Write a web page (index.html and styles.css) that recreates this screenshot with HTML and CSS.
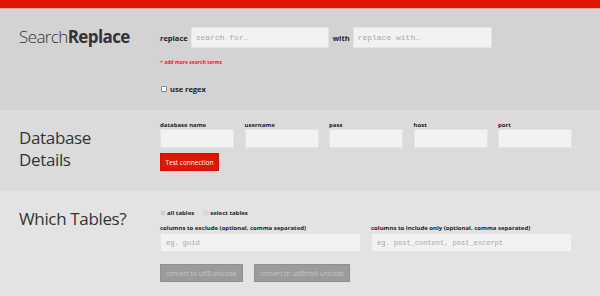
FILE: index.html
```html
<!DOCTYPE html>
<html lang="en">
  <head>
    <meta charset="UTF-8" />
    <meta name="viewport" content="width=device-width, initial-scale=1.0" />
    <title>Search Replace DB</title>
    <link rel="stylesheet" href="styles.css">
  </head>
  <body>
    <div class="topbar"></div>

    <div class="section search">
      <h1 class="heading">Search<strong>Replace</strong></h1>
      <div class="form">
        <div class="replace-row">
          <label for="search">replace</label>
          <input type="text" id="search" placeholder="search for…" />
          <label for="replace">with</label>
          <input type="text" id="replace" placeholder="replace with…" />
        </div>
        <a href="#" class="add-more">+ add more search terms</a>
        <div class="check-row">
          <input type="checkbox" id="regex" />
          <label for="regex">use regex</label>
        </div>
      </div>
    </div>

    <div class="section database">
      <h2 class="heading">Database<br />Details</h2>
      <div class="form">
        <div class="fields">
          <div class="field">
            <label for="db-name">database name</label>
            <input type="text" id="db-name" />
          </div>
          <div class="field">
            <label for="db-user">username</label>
            <input type="text" id="db-user" />
          </div>
          <div class="field">
            <label for="db-pass">pass</label>
            <input type="password" id="db-pass" />
          </div>
          <div class="field">
            <label for="db-host">host</label>
            <input type="text" id="db-host" />
          </div>
          <div class="field">
            <label for="db-port">port</label>
            <input type="text" id="db-port" />
          </div>
        </div>
        <button class="btn-red">Test connection</button>
      </div>
    </div>

    <div class="section tables">
      <h2 class="heading">Which Tables?</h2>
      <div class="form">
        <div class="radio-row">
          <input type="radio" name="tables" id="all-tables" checked />
          <label for="all-tables">all tables</label>
          <input type="radio" name="tables" id="select-tables" />
          <label for="select-tables">select tables</label>
        </div>
        <div class="columns">
          <div class="column">
            <label for="exclude">columns to exclude (optional, comma separated)</label>
            <input type="text" id="exclude" placeholder="eg. guid" />
          </div>
          <div class="column">
            <label for="include">columns to include only (optional, comma separated)</label>
            <input type="text" id="include" placeholder="eg. post_content, post_excerpt" />
          </div>
        </div>
        <div class="buttons">
          <button class="btn-gray" disabled>convert to utf8 unicode</button>
          <button class="btn-gray" disabled>convert to utf8mb4 unicode</button>
        </div>
      </div>
    </div>
  </body>
</html>
```

FILE: styles.css
```css
* {
  margin: 0;
  padding: 0;
  box-sizing: border-box;
}

body {
  font-family: "Open Sans", Arial, sans-serif;
  background: #e3e3e3;
  color: #222;
  height: 100vh;
  overflow: hidden;
}

.topbar {
  height: 9px;
  background: #e01600;
  border-bottom: 1px solid #e8a49a;
}

.section {
  display: flex;
  padding: 17px 0 0 19px;
}

.heading {
  width: 141px;
  flex-shrink: 0;
  font-size: 17px;
  line-height: 22px;
  font-weight: 400;
  letter-spacing: -0.35px;
  color: #333;
}

.search .heading {
  font-weight: 300;
  letter-spacing: -0.6px;
}

.search .heading strong {
  font-weight: 700;
}

.form label {
  font-weight: 700;
  color: #222;
}

input[type="text"],
input[type="password"] {
  display: block;
  background: #f2f2f2;
  border: 1px solid #e4e4e4;
  font-family: "Liberation Mono", monospace;
  outline: none;
}

input::placeholder {
  color: #a8a8a8;
}

/* search / replace */
.search {
  background: #d3d3d3;
  height: 101px;
}

.replace-row {
  display: flex;
  align-items: center;
  height: 21px;
  margin-top: 1px;
}

.replace-row label {
  font-size: 7.5px;
  margin-right: 3px;
}

.replace-row input {
  height: 21px;
  padding: 0 4px;
  font-size: 8px;
}

#search {
  width: 138px;
  margin-right: 4px;
}

#replace {
  width: 139px;
}

.add-more {
  display: block;
  margin-top: 11px;
  font-size: 5px;
  line-height: 7px;
  font-weight: 700;
  color: #e5261b;
  text-decoration: none;
}

.check-row {
  display: flex;
  align-items: center;
  height: 10px;
  margin-top: 18px;
}

.check-row input {
  appearance: none;
  width: 6px;
  height: 6px;
  margin: 0 3px 0 1px;
  background: #fff;
  border: 1px solid #888;
  border-radius: 1px;
}

.check-row label {
  font-size: 7.5px;
}

/* database */
.database {
  background: #dbdbdb;
  height: 81px;
  padding-top: 11px;
}

.database .heading {
  margin-top: 6px;
}

.fields {
  display: flex;
  gap: 10.5px;
}

.field label {
  display: block;
  font-size: 6px;
  line-height: 8px;
}

.field input {
  width: 74px;
  height: 19px;
}

.btn-red {
  display: block;
  margin-top: 5px;
  width: 59px;
  height: 18px;
  background: #e01600;
  color: white;
  border: 1px solid #c81400;
  font-family: "Open Sans", Arial, sans-serif;
  font-size: 6.5px;
}

/* tables */
.tables {
  flex: 1;
}

.radio-row {
  display: flex;
  align-items: center;
  height: 10px;
}

.radio-row input {
  appearance: none;
  width: 6px;
  height: 6px;
  border-radius: 50%;
  background: #d8d8d8;
  margin: 0 1px 0 0;
}

.radio-row input:checked {
  background: #cfcfcf;
  border: 1.5px solid #dcdcdc;
}

.radio-row label {
  font-size: 6px;
  margin-right: 9px;
}

.columns {
  display: flex;
  gap: 10px;
  margin-top: 6px;
}

.column label {
  display: block;
  font-size: 6px;
  line-height: 8px;
  margin-bottom: 1px;
}

.column input {
  width: 201px;
  height: 19px;
  padding: 0 5px;
  font-size: 7px;
}

.buttons {
  display: flex;
  gap: 11px;
  margin-top: 12px;
}

.btn-gray {
  height: 18px;
  padding: 0 5px;
  background: #9b9b9b;
  color: #c6c6c6;
  border: 1px solid #8f8f8f;
  font-family: "Open Sans", Arial, sans-serif;
  font-size: 6.5px;
}
```
